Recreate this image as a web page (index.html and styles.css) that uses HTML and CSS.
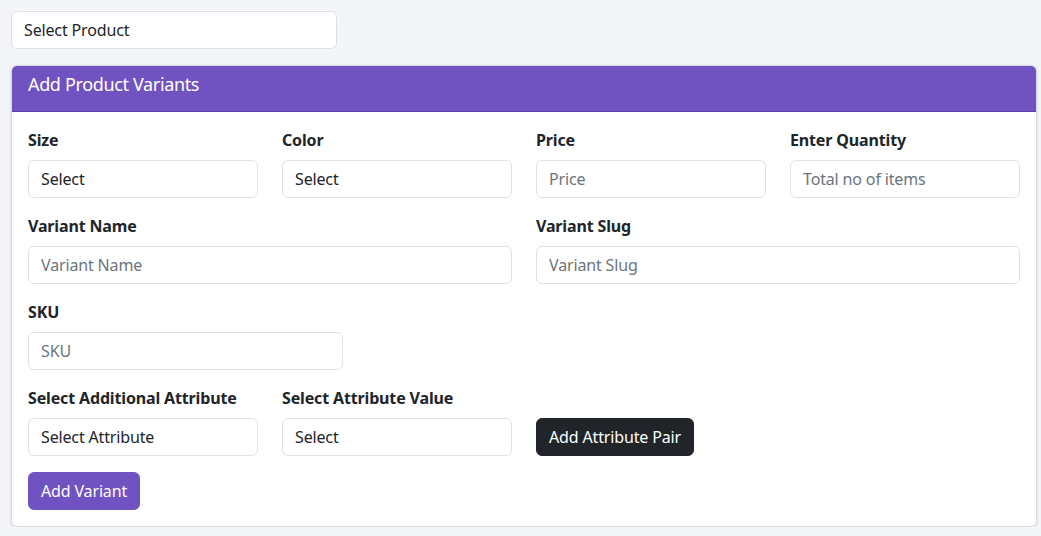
FILE: index.html
```html
<!DOCTYPE html>
<html lang="en">
<head>
<meta charset="utf-8">
<title>Add Product Variants</title>
<link rel="stylesheet" href="styles.css">
</head>
<body>
<div class="page">
  <div class="product-pick">
    <select class="control">
      <option>Select Product</option>
    </select>
  </div>

  <div class="card">
    <div class="card-header">Add Product Variants</div>
    <div class="card-body">
      <div class="row">
        <div class="field c3">
          <label class="label">Size</label>
          <select class="control"><option>Select</option></select>
        </div>
        <div class="field c3">
          <label class="label">Color</label>
          <select class="control"><option>Select</option></select>
        </div>
        <div class="field c3">
          <label class="label">Price</label>
          <input class="control" type="text" placeholder="Price">
        </div>
        <div class="field c3">
          <label class="label">Enter Quantity</label>
          <input class="control" type="text" placeholder="Total no of items">
        </div>
      </div>
      <div class="row">
        <div class="field c6">
          <label class="label">Variant Name</label>
          <input class="control" type="text" placeholder="Variant Name">
        </div>
        <div class="field c6">
          <label class="label">Variant Slug</label>
          <input class="control" type="text" placeholder="Variant Slug">
        </div>
      </div>
      <div class="row">
        <div class="field c4">
          <label class="label">SKU</label>
          <input class="control" type="text" placeholder="SKU">
        </div>
      </div>
      <div class="row row-end">
        <div class="field c3">
          <label class="label">Select Additional Attribute</label>
          <select class="control"><option>Select Attribute</option></select>
        </div>
        <div class="field c3">
          <label class="label">Select Attribute Value</label>
          <select class="control"><option>Select</option></select>
        </div>
        <div class="field c3">
          <button class="btn btn-dark" type="button">Add Attribute Pair</button>
        </div>
      </div>
      <button class="btn btn-purple" type="button">Add Variant</button>
    </div>
  </div>
</div>
</body>
</html>
```

FILE: styles.css
```css
* { box-sizing: border-box; }

html, body {
  margin: 0;
  padding: 0;
  background: #f4f5f9;
  font-family: "Noto Sans", "Open Sans", "Liberation Sans", sans-serif;
  font-size: 16px;
  line-height: 1.5;
  letter-spacing: -0.15px;
  color: #212529;
}

.page {
  padding: 11px 4px 0 11px;
}

.product-pick {
  width: 326px;
  margin-bottom: 16px;
}

.control {
  display: block;
  width: 100%;
  height: 38px;
  padding: 6px 12px;
  font-family: inherit;
  font-size: 16px;
  line-height: 24px;
  letter-spacing: -0.15px;
  color: #212529;
  background: #fff;
  border: 1px solid #dee2e6;
  border-radius: 6px;
  appearance: none;
  -webkit-appearance: none;
  outline: none;
}

.control::placeholder {
  color: #6c757d;
  opacity: 1;
}

.card {
  background: #fff;
  border: 1px solid #d9dbe0;
  border-radius: 6px;
  box-shadow: 0 1px 3px rgba(0, 0, 0, 0.14);
  overflow: hidden;
}

.card-header {
  background: #7152c1;
  color: #fff;
  font-size: 18px;
  line-height: 27px;
  letter-spacing: -0.35px;
  padding: 5px 16px 13px;
  border-bottom: 1px solid #5b3fa6;
}

.card-body {
  padding: 16px;
}

.row {
  display: flex;
  gap: 24px;
  margin-bottom: 16px;
}

.row-end {
  align-items: flex-end;
}

.c3 { width: 230px; }
.c4 { width: 315px; }
.c6 { width: 484px; }

.field {
  display: flex;
  flex-direction: column;
}

.label {
  font-weight: 700;
  line-height: 24px;
  margin-bottom: 8px;
}

.btn {
  display: inline-block;
  height: 38px;
  padding: 6px 12px;
  font-family: inherit;
  font-size: 16px;
  line-height: 24px;
  letter-spacing: -0.15px;
  border: 1px solid transparent;
  border-radius: 6px;
  color: #fff;
  cursor: pointer;
  align-self: flex-start;
}

.btn-dark {
  background: #212529;
  border-color: #212529;
}

.btn-purple {
  background: #7152c1;
  border-color: #7152c1;
}
```
